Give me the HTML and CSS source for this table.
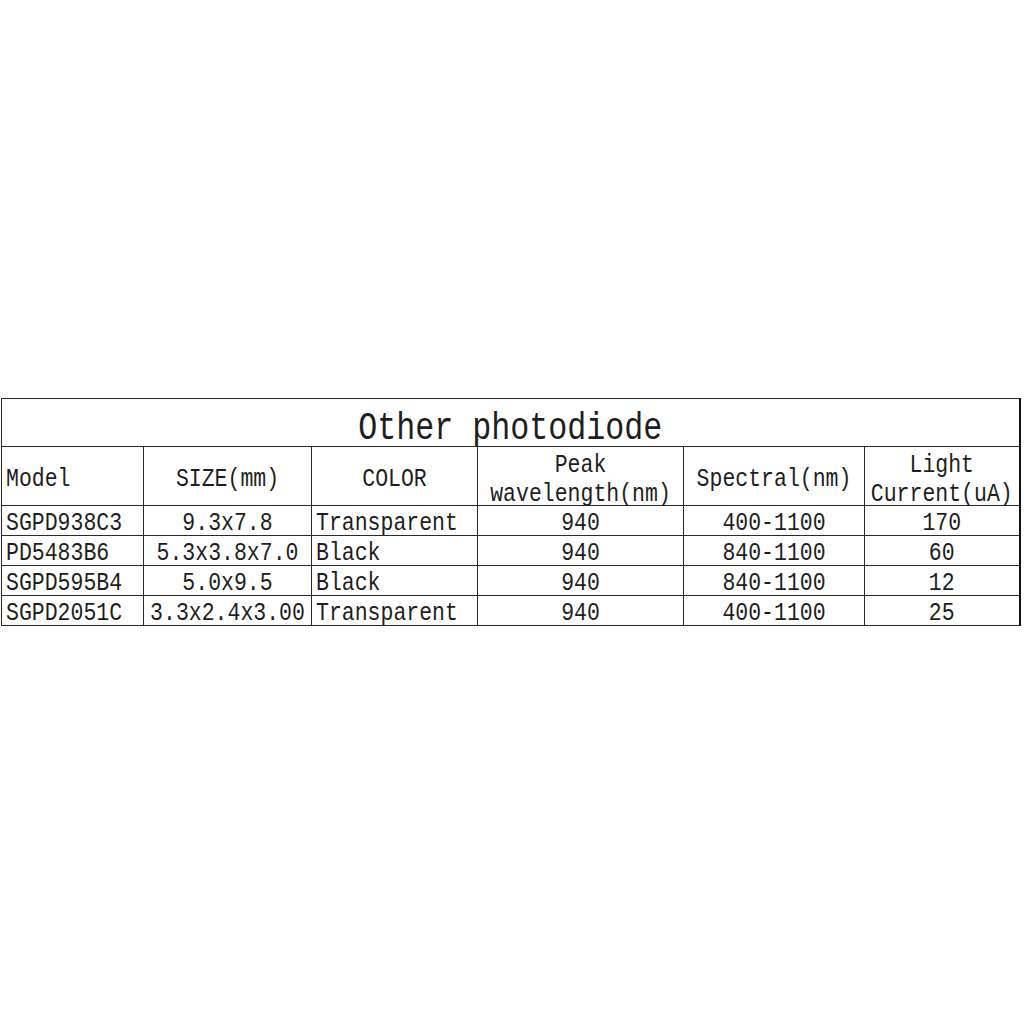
FILE: index.html
```html
<!DOCTYPE html>
<html lang="en">
<head>
<meta charset="utf-8">
<title>Other photodiode</title>
<link rel="stylesheet" href="styles.css">
</head>
<body>
<table class="spec">
  <colgroup>
    <col class="c1"><col class="c2"><col class="c3"><col class="c4"><col class="c5"><col class="c6">
  </colgroup>
  <tr class="title-row"><td colspan="6" class="title"><span class="t">Other photodiode</span></td></tr>
  <tr class="head-row">
    <td class="left"><span class="t">Model</span></td>
    <td><span class="t">SIZE(mm)</span></td>
    <td><span class="t">COLOR</span></td>
    <td><span class="t">Peak<br>wavelength(nm)</span></td>
    <td><span class="t">Spectral(nm)</span></td>
    <td><span class="t">Light<br>Current(uA)</span></td>
  </tr>
  <tr class="row">
    <td class="left"><span class="t">SGPD938C3</span></td>
    <td><span class="t">9.3x7.8</span></td>
    <td class="left"><span class="t">Transparent</span></td>
    <td><span class="t">940</span></td>
    <td><span class="t">400-1100</span></td>
    <td><span class="t">170</span></td>
  </tr>
  <tr class="row">
    <td class="left"><span class="t">PD5483B6</span></td>
    <td><span class="t">5.3x3.8x7.0</span></td>
    <td class="left"><span class="t">Black</span></td>
    <td><span class="t">940</span></td>
    <td><span class="t">840-1100</span></td>
    <td><span class="t">60</span></td>
  </tr>
  <tr class="row">
    <td class="left"><span class="t">SGPD595B4</span></td>
    <td><span class="t">5.0x9.5</span></td>
    <td class="left"><span class="t">Black</span></td>
    <td><span class="t">940</span></td>
    <td><span class="t">840-1100</span></td>
    <td><span class="t">12</span></td>
  </tr>
  <tr class="row">
    <td class="left"><span class="t">SGPD2051C</span></td>
    <td><span class="t">3.3x2.4x3.00</span></td>
    <td class="left"><span class="t">Transparent</span></td>
    <td><span class="t">940</span></td>
    <td><span class="t">400-1100</span></td>
    <td><span class="t">25</span></td>
  </tr>
</table>
</body>
</html>
```
FILE: styles.css
```css
html, body {
  margin: 0;
  padding: 0;
  background: #ffffff;
}
body {
  padding-top: 398px;
  padding-left: 1px;
  font-family: "Liberation Mono", "Noto Sans CJK SC", monospace;
  color: #1e1e1e;
}
.spec {
  border-collapse: collapse;
  table-layout: fixed;
  width: 1018px;
  border-right: 2px solid #111;
}
.c1 { width: 142px; }
.c2 { width: 168px; }
.c3 { width: 166px; }
.c4 { width: 206px; }
.c5 { width: 181px; }
.c6 { width: 155px; }
.spec td {
  border: 1px solid #2a2a2a;
  padding: 0;
  text-align: center;
  vertical-align: middle;
  font-size: 21.5px;
  line-height: 24px;
  white-space: nowrap;
  overflow: visible;
  box-sizing: border-box;
}
.spec td.left {
  text-align: left;
  padding-left: 4px;
}
.t {
  display: inline-block;
  transform: scaleY(1.2);
}
.title-row td {
  height: 48px;
  font-size: 31.7px;
  padding-top: 12px;
  line-height: 34px;
}
.head-row td {
  height: 59px;
  padding-top: 5px;
}
.row td {
  height: 30px;
  padding-top: 4px;
}
```
